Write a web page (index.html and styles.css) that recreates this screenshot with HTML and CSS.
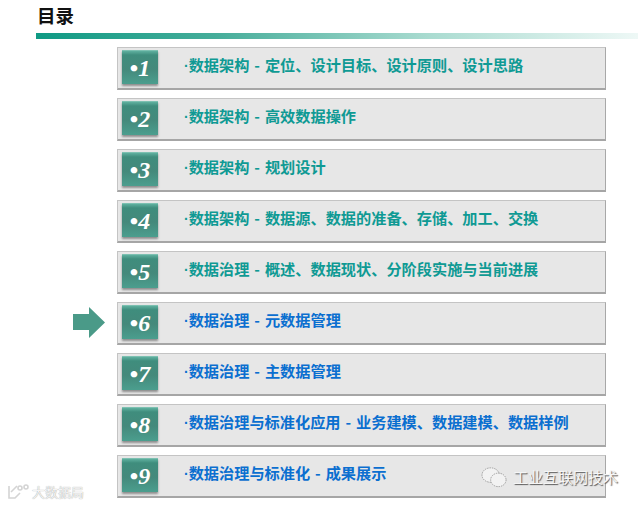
FILE: index.html
```html
<!DOCTYPE html>
<html lang="zh">
<head>
<meta charset="utf-8">
<title>目录</title>
<link rel="stylesheet" href="styles.css">
</head>
<body>
<div class="page">
  <h1 class="title">目录</h1>
  <div class="rule"></div>
  <div class="list">
    <div class="row"><div class="num">•<i>1</i></div><div class="txt teal"><span class="dot">·</span>数据架构 - 定位、设计目标、设计原则、设计思路</div></div>
    <div class="row"><div class="num">•<i>2</i></div><div class="txt teal"><span class="dot">·</span>数据架构 - 高效数据操作</div></div>
    <div class="row"><div class="num">•<i>3</i></div><div class="txt teal"><span class="dot">·</span>数据架构 - 规划设计</div></div>
    <div class="row"><div class="num">•<i>4</i></div><div class="txt teal"><span class="dot">·</span>数据架构 - 数据源、数据的准备、存储、加工、交换</div></div>
    <div class="row"><div class="num">•<i>5</i></div><div class="txt teal"><span class="dot">·</span>数据治理 - 概述、数据现状、分阶段实施与当前进展</div></div>
    <div class="row">
      <svg class="arrow" width="32" height="31" viewBox="0 0 32 31"><path d="M0 7H16V0L32 15.500L16 31V23H0Z" fill="#4a9a88"/></svg>
      <div class="num">•<i>6</i></div><div class="txt blue"><span class="dot">·</span>数据治理 - 元数据管理</div>
    </div>
    <div class="row"><div class="num">•<i>7</i></div><div class="txt blue"><span class="dot">·</span>数据治理 - 主数据管理</div></div>
    <div class="row"><div class="num">•<i>8</i></div><div class="txt blue"><span class="dot">·</span>数据治理与标准化应用 - 业务建模、数据建模、数据样例</div></div>
    <div class="row"><div class="num">•<i>9</i></div><div class="txt blue"><span class="dot">·</span>数据治理与标准化 - 成果展示</div></div>
  </div>
  <div class="mark-left">
    <svg width="24" height="16" viewBox="0 0 24 16"><g fill="none" stroke="#d4d4d4" stroke-width="1.6"><path d="M2 2V14H8L13 9"/><path d="M4 8L10 2"/><circle cx="13" cy="4" r="2"/><circle cx="19" cy="3" r="2"/></g></svg>
    <span>大数据局</span>
  </div>
  <div class="mark-right">
    <svg width="27" height="22" viewBox="0 0 28 22"><g fill="#f2f2f2" stroke="#9a9a9a" stroke-width="1" stroke-dasharray="1.5 1"><ellipse cx="10" cy="9" rx="9" ry="7.5"/><ellipse cx="18" cy="14" rx="8" ry="7"/></g></svg>
    <span>工业互联网技术</span>
  </div>
</div>
</body>
</html>
```
FILE: styles.css
```css
* { box-sizing: border-box; }
html, body { margin: 0; padding: 0; background: #fff; }
.page {
  position: relative;
  width: 638px;
  height: 506px;
  overflow: hidden;
  padding-top: 3px;
  font-family: "Noto Sans CJK SC", "Liberation Sans", sans-serif;
}
.title {
  margin: 0 0 0 37px;
  height: 24px;
  font-size: 18.5px;
  line-height: 24px;
  font-weight: 700;
  color: #111;
}
.rule {
  margin: 6px 0 0 36px;
  height: 6px;
  background: linear-gradient(90deg, #0f9a84 0%, #46ad9a 30%, #a9dbd0 65%, #eef8f6 100%);
}
.list {
  display: flex;
  flex-direction: column;
  gap: 8px;
  margin: 8px 0 0 117px;
  width: 489px;
}
.row {
  position: relative;
  display: flex;
  align-items: center;
  height: 43px;
  padding-left: 4px;
  background: #e7e7e7;
  border: 1px solid #c4c4c4;
  border-right-color: #a8a8a8;
  border-bottom: 2px solid #a6a6a6;
}
.num {
  flex: none;
  display: flex;
  align-items: center;
  justify-content: center;
  width: 36px;
  height: 34px;
  margin-top: -2px;
  font-family: "Liberation Serif", serif;
  font-size: 24px;
  line-height: 1;
  font-weight: 700;
  color: #fff;
  background: linear-gradient(180deg, #5fb09f 0%, #3f8d7d 12%, #44897b 55%, #4b9e8e 100%);
  border-top: 1px solid #7cc0b1;
  box-shadow: 0 2px 2px rgba(70, 70, 70, .55);
}
.num i { font-style: italic; }
.txt {
  margin-left: 26px;
  margin-top: -6px;
  font-size: 15.2px;
  line-height: 20px;
  font-weight: 700;
  word-spacing: 1.5px;
  white-space: nowrap;
}
.dot {
  font-family: "Liberation Sans", sans-serif;
  font-weight: 700;
  font-size: 14px;
}
.teal { color: #0f9a94; }
.blue { color: #0b6fd0; }
.arrow {
  position: absolute;
  left: -45px;
  top: 4px;
}
.mark-left {
  position: absolute;
  left: 7px;
  top: 484px;
  display: flex;
  align-items: center;
  gap: 1px;
  font-size: 13px;
  line-height: 16px;
  color: #f4f4f4;
  text-shadow: 0 0 1px #888;
}
.mark-right {
  position: absolute;
  left: 481px;
  top: 466px;
  display: flex;
  align-items: center;
  gap: 5px;
  font-size: 15px;
  line-height: 22px;
  color: #f6f6f6;
  text-shadow: 1px 1px 1px #555;
  white-space: nowrap;
}
```
